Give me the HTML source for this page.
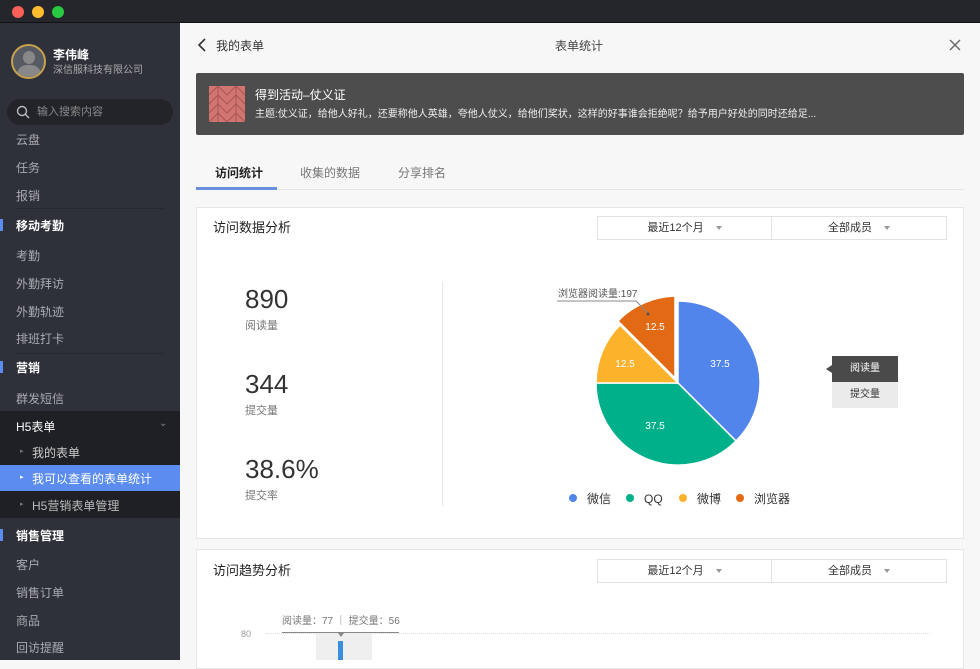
<!DOCTYPE html>
<html><head><meta charset="utf-8"><style>
*{margin:0;padding:0;box-sizing:border-box}
body{width:980px;height:660px;overflow:hidden;font-family:"Liberation Sans","Noto Sans CJK SC",sans-serif;background:#f7f7f7;position:relative;font-size:12px;color:#333;line-height:1.4}
.tb{position:absolute;left:0;top:0;width:980px;height:23px;background:#25262b;border-bottom:1px solid #111}
.dot{position:absolute;top:6px;width:12px;height:12px;border-radius:50%}
.sb{position:absolute;left:0;top:23px;width:180px;height:637px;background:#2f313a;color:#aaa}
.sb .it{position:absolute;left:16px;font-size:12px;color:#a9abb2}
.sb .hd{position:absolute;left:16px;font-size:12px;color:#fff;font-weight:bold}
.sb .bar{position:absolute;left:0;width:3px;height:12px;background:#5b8cf0}
.sb .ln{position:absolute;left:16px;width:148px;height:1px;background:#262830}
.main{position:absolute;left:180px;top:23px;width:800px;height:637px}
.card{position:absolute;background:#fff;border:1px solid #e6e6e6}
.sel{position:absolute;height:24px;border:1px solid #e2e2e2;background:#fff;font-size:11px;color:#333;text-align:center;line-height:22px}
.tri{display:inline-block;margin-left:12px;border-left:3px solid transparent;border-right:3px solid transparent;border-top:4px solid #999;vertical-align:middle}
</style></head><body>
<div class="tb">
<div class="dot" style="left:12px;background:#fe5f57"></div>
<div class="dot" style="left:32px;background:#febc2e"></div>
<div class="dot" style="left:52px;background:#28c840"></div>
</div>
<div class="sb">
<div style="position:absolute;left:11px;top:21px;width:35px;height:35px;border-radius:50%;border:2px solid #c9a14a;background:#555a63;overflow:hidden">
<div style="position:absolute;left:10px;top:5px;width:12px;height:13px;border-radius:50%;background:#888"></div>
<div style="position:absolute;left:4px;top:19px;width:24px;height:16px;border-radius:10px 10px 0 0;background:#888"></div>
</div>
<div style="position:absolute;left:53px;top:24px;color:#fff;font-size:12px;font-weight:bold">李伟峰</div>
<div style="position:absolute;left:53px;top:41px;color:#aaa;font-size:10px">深信服科技有限公司</div>
<div style="position:absolute;left:7px;top:76px;width:166px;height:26px;border-radius:13px;background:#23242a"></div>
<svg style="position:absolute;left:16px;top:82px" width="14" height="14"><circle cx="6" cy="6" r="4.5" stroke="#bbb" stroke-width="1.4" fill="none"/><path d="M9.3 9.3L13 13" stroke="#bbb" stroke-width="1.4"/></svg>
<div style="position:absolute;left:37px;top:82px;color:#888;font-size:11px">输入搜索内容</div>
<div class="it" style="top:109px">云盘</div>
<div class="it" style="top:137px">任务</div>
<div class="it" style="top:165px">报销</div>
<div class="ln" style="top:185px"></div>
<div class="bar" style="top:196px"></div><div class="hd" style="top:195px">移动考勤</div>
<div class="it" style="top:225px">考勤</div>
<div class="it" style="top:253px">外勤拜访</div>
<div class="it" style="top:281px">外勤轨迹</div>
<div class="it" style="top:308px">排班打卡</div>
<div class="ln" style="top:330px"></div>
<div class="bar" style="top:338px"></div><div class="hd" style="top:337px">营销</div>
<div class="it" style="top:368px">群发短信</div>
<div style="position:absolute;left:0;top:388px;width:180px;height:107px;background:#1f2025"></div>
<div class="hd" style="top:396px;font-weight:normal">H5表单</div>
<div style="position:absolute;left:159px;top:394px;color:#888;font-size:10px">⌄</div>
<div style="position:absolute;left:20px;top:424px;color:#777;font-size:7px">▸</div><div class="it" style="left:32px;top:422px;color:#ccc">我的表单</div>
<div style="position:absolute;left:0;top:442px;width:180px;height:26px;background:#5b8cf0"></div>
<div style="position:absolute;left:20px;top:450px;color:#fff;font-size:7px">▸</div><div class="it" style="left:32px;top:448px;color:#fff">我可以查看的表单统计</div>
<div style="position:absolute;left:20px;top:477px;color:#777;font-size:7px">▸</div><div class="it" style="left:32px;top:475px;color:#bbb">H5营销表单管理</div>
<div class="bar" style="top:506px"></div><div class="hd" style="top:505px">销售管理</div>
<div class="it" style="top:534px">客户</div>
<div class="it" style="top:562px">销售订单</div>
<div class="it" style="top:590px">商品</div>
<div class="it" style="top:617px">回访提醒</div>
</div>
<div class="main">
<svg style="position:absolute;left:17px;top:15px" width="10" height="14"><path d="M8 1L2 7L8 13" stroke="#333" stroke-width="1.6" fill="none"/></svg>
<div style="position:absolute;left:36px;top:15px;font-size:12px">我的表单</div>
<div style="position:absolute;left:375px;top:15px;font-size:12px;color:#444">表单统计</div>
<svg style="position:absolute;left:769px;top:16px" width="12" height="12"><path d="M1 1L11 11M11 1L1 11" stroke="#666" stroke-width="1.4"/></svg>
<div style="position:absolute;left:16px;top:50px;width:768px;height:62px;background:#4d4d4d;border-radius:2px"></div>
<div style="position:absolute;left:29px;top:63px;width:36px;height:36px;background:#d27571;overflow:hidden">
<svg width="36" height="36"><path d="M0 9L9 0L18 9L27 0L36 9M0 18L9 9L18 18L27 9L36 18M0 27L9 18L18 27L27 18L36 27M0 36L9 27L18 36L27 27L36 36M9 0V36M27 0V36" stroke="#a85552" stroke-width="1" fill="none"/></svg></div>
<div style="position:absolute;left:75px;top:64px;color:#fff;font-size:12px">得到活动–仗义证</div>
<div style="position:absolute;left:75px;top:85px;color:#eee;font-size:10px">主题:仗义证，给他人好礼，还要称他人英雄，夸他人仗义，给他们奖状，这样的好事谁会拒绝呢？给予用户好处的同时还给足...</div>
<div style="position:absolute;left:35px;top:142px;font-size:12px;color:#222;font-weight:bold">访问统计</div>
<div style="position:absolute;left:120px;top:142px;font-size:12px;color:#777">收集的数据</div>
<div style="position:absolute;left:218px;top:142px;font-size:12px;color:#777">分享排名</div>
<div style="position:absolute;left:16px;top:166px;width:768px;height:1px;background:#e4e4e4"></div>
<div style="position:absolute;left:16px;top:164px;width:81px;height:3px;background:#6b8fe0"></div>
<div class="card" style="left:16px;top:184px;width:768px;height:332px"></div>
<div style="position:absolute;left:33px;top:196px;font-size:13px;color:#222">访问数据分析</div>
<div class="sel" style="left:417px;top:193px;width:175px">最近12个月<span class="tri"></span></div>
<div class="sel" style="left:591px;top:193px;width:176px">全部成员<span class="tri"></span></div>
<div style="position:absolute;left:65px;top:262px;font-size:26px;color:#333;line-height:1.15">890</div>
<div style="position:absolute;left:65px;top:296px;font-size:11px;color:#777">阅读量</div>
<div style="position:absolute;left:65px;top:347px;font-size:26px;color:#333;line-height:1.15">344</div>
<div style="position:absolute;left:65px;top:381px;font-size:11px;color:#777">提交量</div>
<div style="position:absolute;left:65px;top:432px;font-size:26px;color:#333;line-height:1.15">38.6%</div>
<div style="position:absolute;left:65px;top:466px;font-size:11px;color:#777">提交率</div>
<div style="position:absolute;left:262px;top:259px;width:1px;height:224px;background:#e8e8e8"></div>
<div style="position:absolute;left:652px;top:333px;width:66px;height:26px;background:#4a4a4a;color:#fff;font-size:10px;text-align:center;line-height:26px">阅读量</div>
<div style="position:absolute;left:646px;top:342px;border-top:4px solid transparent;border-bottom:4px solid transparent;border-right:6px solid #4a4a4a"></div>
<div style="position:absolute;left:652px;top:359px;width:66px;height:26px;background:#ebebeb;color:#333;font-size:10px;text-align:center;line-height:26px">提交量</div>
<div class="card" style="left:16px;top:526px;width:768px;height:120px"></div>
<div style="position:absolute;left:33px;top:539px;font-size:13px;color:#222">访问趋势分析</div>
<div class="sel" style="left:417px;top:536px;width:175px">最近12个月<span class="tri"></span></div>
<div class="sel" style="left:591px;top:536px;width:176px">全部成员<span class="tri"></span></div>
<div style="position:absolute;left:61px;top:605px;font-size:9px;color:#999">80</div>
<div style="position:absolute;left:86px;top:610px;width:664px;border-top:1px dotted #ddd"></div>
<div style="position:absolute;left:136px;top:610px;width:56px;height:27px;background:#efefef"></div>
<div style="position:absolute;left:158px;top:618px;width:5px;height:19px;background:#3a8fdc"></div>
<div style="position:absolute;left:102px;top:592px;font-size:10px;color:#777">阅读量：77 ｜ 提交量：56</div>
<div style="position:absolute;left:102px;top:609px;width:117px;height:1px;background:#888"></div>
<div style="position:absolute;left:158px;top:610px;border-left:3px solid transparent;border-right:3px solid transparent;border-top:4px solid #888"></div>
</div>
<svg style="position:absolute;left:0;top:0" width="980" height="660">
<g stroke="#fff" stroke-width="1.5">
<path d="M678,383 L678,301 A82,82 0 0 1 736,441 Z" fill="#5285ec"/>
<path d="M678,383 L736,441 A82,82 0 0 1 596,383 Z" fill="#00b08a"/>
<path d="M678,383 L596,383 A82,82 0 0 1 620,325 Z" fill="#fdb22c"/>
<path d="M675,378 L618,321 A82,82 0 0 1 675,296 Z" fill="#e36a14"/>
</g>
<g fill="#fff" font-size="10" font-family="Liberation Sans" text-anchor="middle">
<text x="720" y="367">37.5</text><text x="655" y="429">37.5</text><text x="625" y="367">12.5</text><text x="655" y="330">12.5</text>
</g>
<path d="M557,301 L636,301 L648,313" stroke="#888" fill="none"/>
<circle cx="648" cy="314" r="1.5" fill="#555"/>
<text x="558" y="297" font-size="10" fill="#555" font-family="Liberation Sans,Noto Sans CJK SC">浏览器阅读量:197</text>
<g font-size="12" fill="#333" font-family="Liberation Sans,Noto Sans CJK SC">
<circle cx="573" cy="498" r="4" fill="#5285ec"/><text x="587" y="503">微信</text>
<circle cx="630" cy="498" r="4" fill="#00b08a"/><text x="644" y="503">QQ</text>
<circle cx="683" cy="498" r="4" fill="#fdb22c"/><text x="697" y="503">微博</text>
<circle cx="740" cy="498" r="4" fill="#e36a14"/><text x="754" y="503">浏览器</text>
</g>
</svg>
</body></html>
